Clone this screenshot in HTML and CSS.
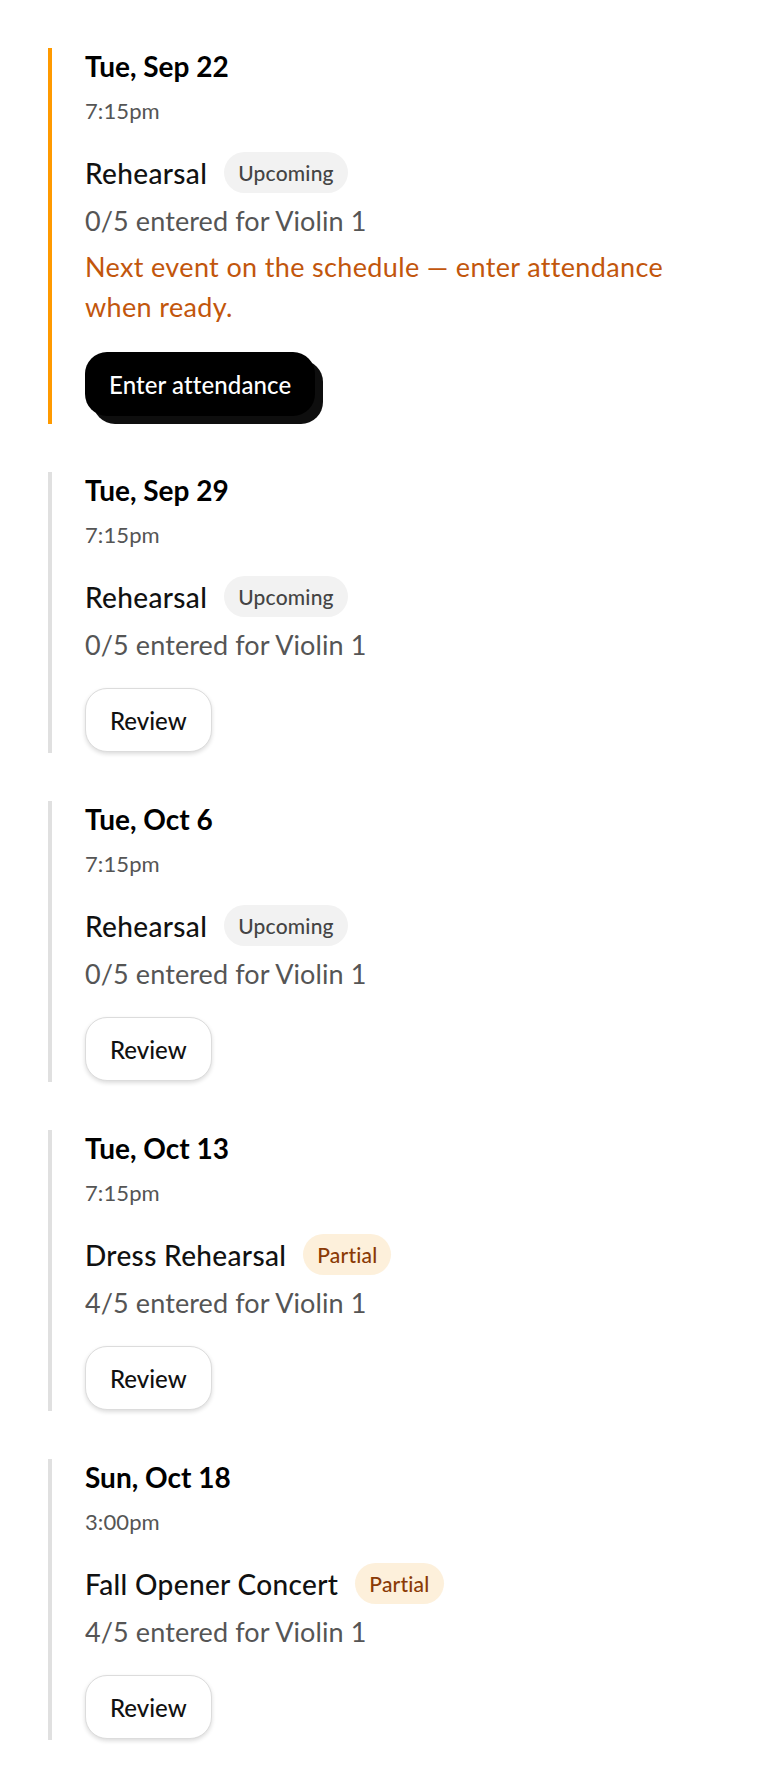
FILE: index.html
```html
<!DOCTYPE html>
<html lang="en">
<head>
<meta charset="utf-8">
<title>Attendance</title>
<link rel="stylesheet" href="styles.css">
</head>
<body>
<main class="list">
  <section class="event event--active">
    <div class="date">Tue, Sep 22</div>
    <div class="time">7:15pm</div>
    <div class="title-row">
      <span class="title">Rehearsal</span>
      <span class="badge badge--upcoming">Upcoming</span>
    </div>
    <div class="count">0/5 entered for Violin 1</div>
    <p class="note">Next event on the schedule — enter attendance when ready.</p>
    <button class="btn btn--primary">Enter attendance</button>
  </section>

  <section class="event">
    <div class="date">Tue, Sep 29</div>
    <div class="time">7:15pm</div>
    <div class="title-row">
      <span class="title">Rehearsal</span>
      <span class="badge badge--upcoming">Upcoming</span>
    </div>
    <div class="count">0/5 entered for Violin 1</div>
    <button class="btn btn--secondary">Review</button>
  </section>

  <section class="event">
    <div class="date">Tue, Oct 6</div>
    <div class="time">7:15pm</div>
    <div class="title-row">
      <span class="title">Rehearsal</span>
      <span class="badge badge--upcoming">Upcoming</span>
    </div>
    <div class="count">0/5 entered for Violin 1</div>
    <button class="btn btn--secondary">Review</button>
  </section>

  <section class="event">
    <div class="date">Tue, Oct 13</div>
    <div class="time">7:15pm</div>
    <div class="title-row">
      <span class="title">Dress Rehearsal</span>
      <span class="badge badge--partial">Partial</span>
    </div>
    <div class="count">4/5 entered for Violin 1</div>
    <button class="btn btn--secondary">Review</button>
  </section>

  <section class="event">
    <div class="date">Sun, Oct 18</div>
    <div class="time">3:00pm</div>
    <div class="title-row">
      <span class="title">Fall Opener Concert</span>
      <span class="badge badge--partial">Partial</span>
    </div>
    <div class="count">4/5 entered for Violin 1</div>
    <button class="btn btn--secondary">Review</button>
  </section>
</main>
</body>
</html>
```

FILE: styles.css
```css
* { box-sizing: border-box; }

html, body {
  margin: 0;
  padding: 0;
  background: #ffffff;
}

body {
  font-family: "Lato", "Noto Sans", "DejaVu Sans", sans-serif;
  color: #111111;
}

.list {
  display: flex;
  flex-direction: column;
  align-items: flex-start;
  gap: 48px;
  padding: 48px 0 40px 48px;
}

.event {
  display: flex;
  flex-direction: column;
  align-items: flex-start;
  border-left: 4px solid #e0e0e0;
  padding: 0 0 1px 33px;
  width: 100%;
}

.event--active {
  border-left-color: #ff9a00;
  padding-bottom: 0;
}

.date {
  font-size: 28px;
  line-height: 36px;
  font-weight: 700;
  color: #000000;
}

.time {
  margin-top: 13px;
  font-size: 22px;
  line-height: 28px;
  letter-spacing: 0.1px;
  color: #555555;
}

.title-row {
  margin-top: 27px;
  display: flex;
  align-items: center;
  gap: 17px;
  height: 41px;
}

.title {
  font-size: 28px;
  line-height: 36px;
  font-weight: 500;
  letter-spacing: 0.35px;
  color: #111111;
}

.badge {
  display: inline-flex;
  align-items: center;
  height: 41px;
  padding: 0 14px;
  border-radius: 999px;
  font-size: 21px;
  font-weight: 500;
  letter-spacing: 0.2px;
}

.badge--upcoming {
  background: #f2f2f2;
  color: #444444;
}

.badge--partial {
  background: #fdf0db;
  color: #8a3a05;
}

.count {
  margin-top: 11px;
  font-size: 27px;
  line-height: 34px;
  letter-spacing: 0.1px;
  color: #555555;
}

.note {
  margin: 9px 0 0 0;
  max-width: 620px;
  font-size: 27px;
  line-height: 40px;
  letter-spacing: 0.35px;
  color: #c2560c;
}

.btn {
  margin-top: 26px;
  height: 64px;
  padding: 0 24px;
  border-radius: 22px;
  font-family: inherit;
  font-size: 24px;
  font-weight: 500;
  cursor: pointer;
}

.btn--primary {
  margin-top: 25px;
  margin-bottom: 8px;
  background: #000000;
  color: #ffffff;
  border: none;
  letter-spacing: 0.1px;
  box-shadow: 8px 8px 0 #0e0e0e;
}

.btn--secondary {
  background: #ffffff;
  color: #111111;
  border: 1.5px solid #dcdcdc;
  box-shadow: 0 2px 4px rgba(0, 0, 0, 0.14);
}
```
